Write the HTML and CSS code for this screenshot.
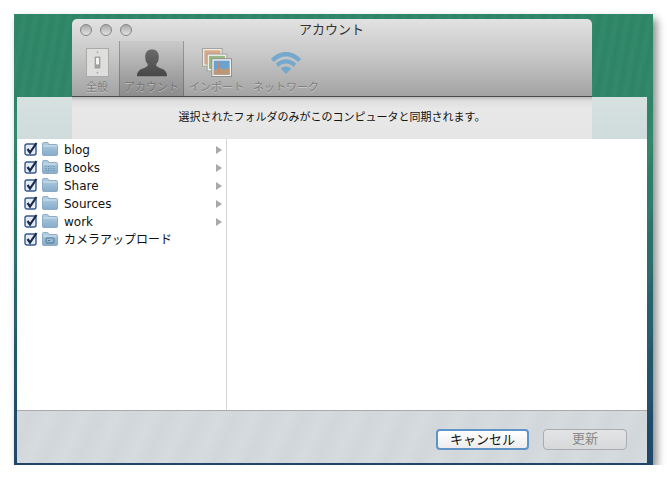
FILE: index.html
```html
<!DOCTYPE html>
<html lang="ja">

<head>
    <meta charset="UTF-8">
    <meta name="viewport" content="width=device-width, initial-scale=1.0">
    <title>アカウント</title>
    <link rel="stylesheet" href="styles.css">
</head>

<body>
    <svg class="defs" width="0" height="0">
        <defs>
            <linearGradient id="folderFill" x1="0" y1="0" x2="0" y2="1">
                <stop offset="0" stop-color="#b3cfe3" />
                <stop offset="1" stop-color="#86abc9" />
            </linearGradient>
            <linearGradient id="personFill" x1="0" y1="0" x2="0" y2="1">
                <stop offset="0" stop-color="#6a6a6a" />
                <stop offset="1" stop-color="#474747" />
            </linearGradient>
            <symbol id="folder" viewBox="0 0 16 14">
                <path d="M.5 3V1.6C.5 1 1 .5 1.6.5h3.6c.5 0 .8.2 1 .6L6.800 2.500h7.600c.6 0 1.100.5 1.100 1.100V12.400c0 .6-.5 1.100-1.100 1.100H1.600C1 13.500.5 13 .5 12.400Z" fill="url(#folderFill)" stroke="#7f9fb9" stroke-width=".8" />
                <path d="M1 4h14" stroke="#d3e3ef" stroke-width="1" />
            </symbol>
            <symbol id="check" viewBox="0 0 14 14">
                <rect x="1" y="2" width="11" height="11" rx="2" fill="#e4ebf5" stroke="#34598f" stroke-width="1.400" />
                <path d="M3.500 7l2.500 3.500L12.500 1" fill="none" stroke="#1b2a4a" stroke-width="2.200" />
            </symbol>
        </defs>
    </svg>

    <div class="desktop">
        <!-- Preferences window -->
        <div class="prefs">
            <div class="titlebar">
                <div class="lights">
                    <span class="light"></span>
                    <span class="light"></span>
                    <span class="light"></span>
                </div>
                <div class="title">アカウント</div>
            </div>
            <div class="toolbar">
                <div class="tool tool-general">
                    <svg width="23" height="29" viewBox="0 0 24 31" preserveAspectRatio="none">
                        <rect x=".5" y=".5" width="23" height="30" fill="#dededc" stroke="#a8a8a8" />
                        <rect x="9" y="9" width="6" height="13" rx="1" fill="#a0a0a0" />
                        <rect x="10.500" y="10.500" width="3" height="7" fill="#f6f6f6" />
                        <circle cx="12" cy="4.500" r="1" fill="#b0b0b0" />
                        <circle cx="12" cy="26.500" r="1" fill="#b0b0b0" />
                    </svg>
                    <span>全般</span>
                </div>
                <div class="tool tool-account active">
                    <svg width="32" height="28" viewBox="0 0 33 33" preserveAspectRatio="none">
                        <path d="M1 32c0-6 3-8 8-10 3-1.200 3.500-2.500 3-4.500-1.500-1.500-2.500-4-2.500-8C9.500 3.500 12 .5 16.500.5s7 3 7 9c0 4-1 6.500-2.500 8-.5 2 0 3.300 3 4.500 5 2 8 4 8 10Z" fill="url(#personFill)" />
                    </svg>
                    <span>アカウント</span>
                </div>
                <div class="tool tool-import">
                    <svg width="30" height="29" viewBox="0 0 32 31" preserveAspectRatio="none">
                        <rect x=".5" y=".5" width="21" height="19" fill="#efe9dc" stroke="#a0a0a0" />
                        <rect x="2.500" y="2.500" width="17" height="15" fill="#d6a98c" />
                        <rect x="5.500" y="6.500" width="21" height="18" fill="#eef0e6" stroke="#a0a0a0" />
                        <rect x="7.500" y="8.500" width="17" height="14" fill="#98b884" />
                        <rect x="10.500" y="11.500" width="21" height="19" fill="#f2f2f2" stroke="#8a8a8a" />
                        <rect x="12.500" y="13.500" width="17" height="15" fill="#6aa3cf" />
                        <path d="M12.500 24l6-3 5 2 6-2v7.500h-17Z" fill="#b99a78" />
                        <path d="M18 15v12" stroke="#d0806a" stroke-width="1.500" />
                    </svg>
                    <span>インポート</span>
                </div>
                <div class="tool tool-network">
                    <svg width="30" height="23" viewBox="0 0 32 26" preserveAspectRatio="none">
                        <path d="M0 9C9-1.500 23-1.500 32 9l-3 3.500C21 4 11 4 3 12.500Z" fill="#74a8cd" />
                        <path d="M5 14.500c6.500-7 15.500-7 22 0l-3 3.500c-4.500-5-11.500-5-16 0Z" fill="#74a8cd" />
                        <path d="M10.500 20c3-3.300 8-3.300 11 0L16 26Z" fill="#74a8cd" />
                    </svg>
                    <span>ネットワーク</span>
                </div>
            </div>
        </div>

        <!-- Sync folders sheet -->
        <div class="sheet">
            <div class="sheet-head">
                <p class="sheet-msg">選択されたフォルダのみがこのコンピュータと同期されます。</p>
            </div>
            <div class="browser">
                <ul class="folders">
                    <li class="folder-row">
                        <svg class="check" width="14" height="14"><use href="#check" /></svg>
                        <svg class="folder" width="16" height="14"><use href="#folder" /></svg>
                        <span class="name">blog</span>
                        <span class="arrow"></span>
                    </li>
                    <li class="folder-row">
                        <svg class="check" width="14" height="14"><use href="#check" /></svg>
                        <svg class="folder" width="16" height="14"><use href="#folder" /><path d="M4 6v5M6.500 6v5M9 6v5M12 6v5" stroke="#5f86ab" stroke-width="1" stroke-dasharray="1 1" /></svg>
                        <span class="name">Books</span>
                        <span class="arrow"></span>
                    </li>
                    <li class="folder-row">
                        <svg class="check" width="14" height="14"><use href="#check" /></svg>
                        <svg class="folder" width="16" height="14"><use href="#folder" /></svg>
                        <span class="name">Share</span>
                        <span class="arrow"></span>
                    </li>
                    <li class="folder-row">
                        <svg class="check" width="14" height="14"><use href="#check" /></svg>
                        <svg class="folder" width="16" height="14"><use href="#folder" /></svg>
                        <span class="name">Sources</span>
                        <span class="arrow"></span>
                    </li>
                    <li class="folder-row">
                        <svg class="check" width="14" height="14"><use href="#check" /></svg>
                        <svg class="folder" width="16" height="14"><use href="#folder" /></svg>
                        <span class="name">work</span>
                        <span class="arrow"></span>
                    </li>
                    <li class="folder-row">
                        <svg class="check" width="14" height="14"><use href="#check" /></svg>
                        <svg class="folder" width="16" height="14"><use href="#folder" /><rect x="4" y="6" width="8" height="5" rx="1" fill="none" stroke="#4f7698" /><rect x="6" y="8" width="2" height="1" fill="#4f7698" /></svg>
                        <span class="name name-ja">カメラアップロード</span>
                    </li>
                </ul>
                <div class="detail"></div>
            </div>
            <div class="sheet-foot">
                <button class="btn btn-cancel">キャンセル</button>
                <button class="btn btn-update">更新</button>
            </div>
        </div>
    </div>
</body>

</html>
```

FILE: styles.css
```css
body {
    margin: 0;
    padding: 14px 0 0 14px;
    background-color: #fff;
    font-family: "DejaVu Sans", "Noto Sans CJK JP", sans-serif;
}

.defs {
    display: block;
    height: 0;
}

.desktop {
    box-sizing: border-box;
    width: 639px;
    height: 451px;
    padding: 5px 6px 2px 3px;
    background:
        repeating-linear-gradient(100deg, rgba(255, 255, 255, 0.015), rgba(0, 0, 0, 0.03) 5px, rgba(255, 255, 255, 0.015) 11px),
        linear-gradient(180deg, #2f8868 0, #30866b 30%, #22596e 75%, #1d4468 100%);
    box-shadow: 4px 5px 8px rgba(0, 0, 0, 0.45);
}

.prefs {
    box-sizing: border-box;
    width: 520px;
    height: 78px;
    margin-left: 55px;
    border-radius: 5px 5px 0 0;
    background: linear-gradient(180deg, #e2e2e2 0, #c9c9c9 45%, #a3a3a3 100%);
    border-bottom: 1px solid #4a4a4a;
}

.titlebar {
    display: flex;
    align-items: center;
    height: 22px;
    position: relative;
}

.lights {
    display: flex;
    gap: 8px;
    padding-left: 8px;
}

.light {
    box-sizing: border-box;
    width: 12px;
    height: 12px;
    border-radius: 50%;
    border: 1px solid #858585;
    background: linear-gradient(180deg, #a9a9a9, #e2e2e2);
}

.title {
    position: absolute;
    left: 227px;
    top: 2px;
    font-size: 13px;
    line-height: 18px;
    color: #333;
}

.toolbar {
    display: flex;
    height: 55px;
}

.tool {
    display: flex;
    flex-direction: column;
    align-items: center;
    justify-content: flex-end;
    box-sizing: border-box;
    height: 55px;
    padding-bottom: 1px;
    font-size: 11px;
    line-height: 14px;
    color: #808080;
    text-shadow: 0 1px 0 rgba(255, 255, 255, 0.35);
}

.tool svg {
    display: block;
    margin-bottom: 4px;
}

.tool-general {
    width: 47px;
    padding-left: 3px;
}

.tool-account {
    width: 65px;
}

.tool-import {
    width: 65px;
}

.tool-network {
    width: 74px;
}

.active {
    background: linear-gradient(180deg, rgba(110, 110, 110, 0.08) 0, rgba(90, 90, 90, 0.3) 100%);
    border-left: 1px solid rgba(80, 80, 80, 0.4);
    border-right: 1px solid rgba(80, 80, 80, 0.4);
    color: #747474;
}

.tool-network svg {
    margin-bottom: 7px;
}

.sheet {
    display: flex;
    flex-direction: column;
    height: 366px;
}

.sheet-head {
    height: 42px;
    padding: 0 55px;
    background: linear-gradient(180deg, #d6e1e0 0, #cfdcdb 100%);
}

.sheet-msg {
    height: 42px;
    margin: 0;
    background: linear-gradient(180deg, #bdbdbd 0, #dedede 4px, #e8e8e8 12px, #e6e6e6 100%);
    font-size: 11px;
    line-height: 41px;
    text-align: center;
    color: #111;
}

.browser {
    display: flex;
    flex: 1;
    background-color: #fff;
}

.folders {
    box-sizing: border-box;
    width: 210px;
    margin: 0;
    padding: 2px 0 0 7px;
    list-style: none;
    border-right: 1px solid #d6d6d6;
}

.folder-row {
    display: flex;
    align-items: center;
    height: 18px;
}

.check {
    margin: 0 4px 2px 0;
}

.folder {
    margin: 0 6px 2px 0;
}

.name {
    flex: 1;
    font-size: 12px;
    color: #111;
}

.name-ja {
    margin-bottom: 4px;
}

.arrow {
    width: 0;
    height: 0;
    margin-right: 4px;
    border-left: 6px solid #a9a9a9;
    border-top: 4px solid transparent;
    border-bottom: 4px solid transparent;
}

.detail {
    flex: 1;
}

.sheet-foot {
    display: flex;
    justify-content: flex-end;
    align-items: flex-start;
    gap: 14px;
    box-sizing: border-box;
    height: 53px;
    padding: 18px 20px 0 0;
    border-top: 1px solid #aaa;
    background:
        repeating-linear-gradient(115deg, rgba(255, 255, 255, 0.05), rgba(0, 0, 0, 0.012) 14px, rgba(255, 255, 255, 0.05) 31px),
        #d3d9dc;
}

.btn {
    box-sizing: border-box;
    height: 21px;
    padding: 0 0 2px;
    border-radius: 4px;
    font-family: inherit;
    font-size: 13px;
    line-height: 17px;
}

.btn-cancel {
    width: 93px;
    border: 2px solid #5e94c8;
    background: linear-gradient(180deg, #fff, #ececec);
    color: #111;
}

.btn-update {
    width: 84px;
    border: 1px solid #a9adb0;
    background: linear-gradient(180deg, #e2e4e5, #d6d8d9);
    color: #8a8a8a;
}
```
